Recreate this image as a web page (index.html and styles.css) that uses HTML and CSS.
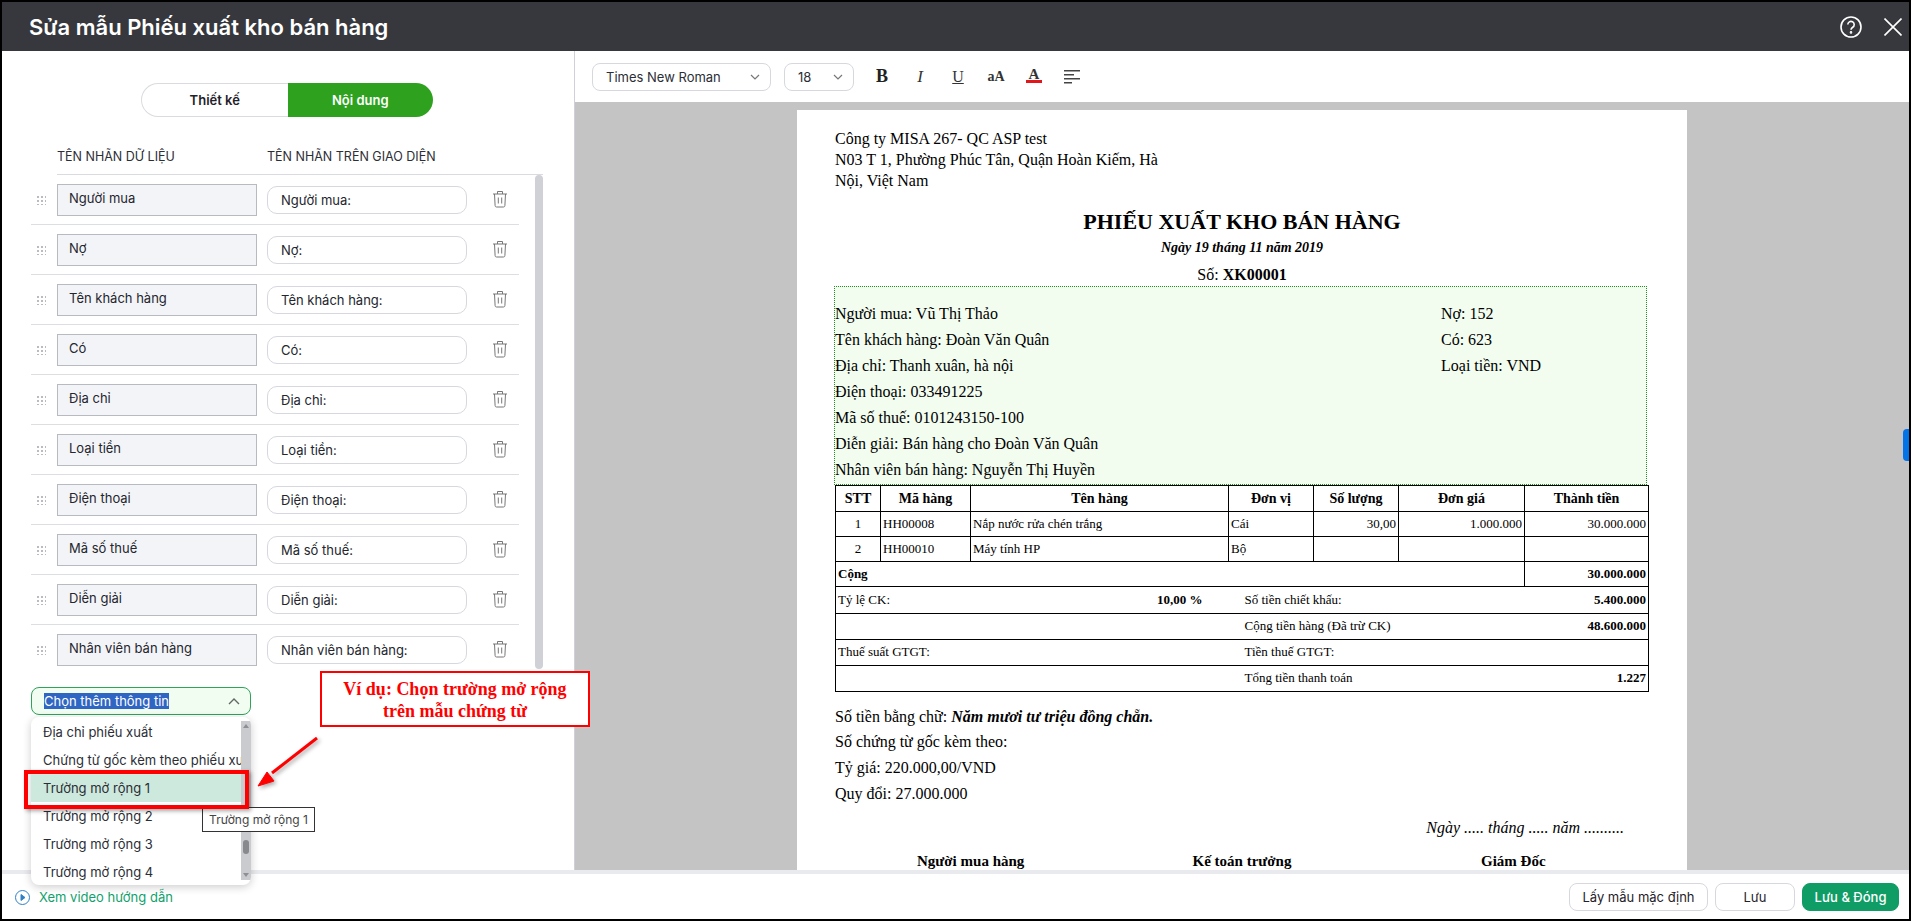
FILE: index.html
```html
<!DOCTYPE html>
<html lang="vi">
<head>
    <meta charset="UTF-8">
    <title>Sửa mẫu Phiếu xuất kho bán hàng</title>
    <link rel="stylesheet" href="styles.css">
</head>
<body>
    <div class="window">
        <header class="top-bar">
            <h1>Sửa mẫu Phiếu xuất kho bán hàng</h1>
            <svg class="top-icon" width="22" height="22" viewBox="0 0 22 22" fill="none" stroke="#fff" stroke-width="1.6">
                <circle cx="11" cy="11" r="10"/>
                <path d="M7.8 8.6a3.2 3.2 0 1 1 4.9 2.7c-1.1.7-1.7 1.2-1.7 2.5"/>
                <circle cx="11" cy="16.4" r=".5" fill="#fff"/>
            </svg>
            <svg class="top-icon close" width="18" height="18" viewBox="0 0 18 18" fill="none" stroke="#fff" stroke-width="1.6">
                <path d="M.5.5l17 17M17.5.5l-17 17"/>
            </svg>
        </header>

        <main class="content">
            <aside class="left-panel">
                <div class="toggle">
                    <span class="toggle-item">Thiết kế</span>
                    <span class="toggle-item active">Nội dung</span>
                </div>

                <div class="col-heads">
                    <span>TÊN NHÃN DỮ LIỆU</span>
                    <span>TÊN NHÃN TRÊN GIAO DIỆN</span>
                </div>

                <div class="list-wrap">
                    <div class="field-list">
                        <div class="field-row">
                            <span class="drag"></span>
                            <span class="data-label">Người mua</span>
                            <span class="ui-label">Người mua:</span>
                            <svg class="trash" width="16" height="18" viewBox="0 0 16 18" fill="none" stroke="#777" stroke-width="1"><path d="M1 4h14M5.5 4V1.5h5V4M2.5 4l.6 11.5c0 1 .6 1.5 1.5 1.5h6.800c.9 0 1.500-.5 1.500-1.500L13.500 4M6.300 7.500v6M9.700 7.500v6"/></svg>
                        </div>
                        <div class="field-row">
                            <span class="drag"></span>
                            <span class="data-label">Nợ</span>
                            <span class="ui-label">Nợ:</span>
                            <svg class="trash" width="16" height="18" viewBox="0 0 16 18" fill="none" stroke="#777" stroke-width="1"><path d="M1 4h14M5.5 4V1.5h5V4M2.5 4l.6 11.5c0 1 .6 1.5 1.5 1.5h6.800c.9 0 1.500-.5 1.500-1.500L13.500 4M6.300 7.500v6M9.700 7.500v6"/></svg>
                        </div>
                        <div class="field-row">
                            <span class="drag"></span>
                            <span class="data-label">Tên khách hàng</span>
                            <span class="ui-label">Tên khách hàng:</span>
                            <svg class="trash" width="16" height="18" viewBox="0 0 16 18" fill="none" stroke="#777" stroke-width="1"><path d="M1 4h14M5.5 4V1.5h5V4M2.5 4l.6 11.5c0 1 .6 1.5 1.5 1.5h6.800c.9 0 1.500-.5 1.500-1.500L13.500 4M6.300 7.500v6M9.700 7.500v6"/></svg>
                        </div>
                        <div class="field-row">
                            <span class="drag"></span>
                            <span class="data-label">Có</span>
                            <span class="ui-label">Có:</span>
                            <svg class="trash" width="16" height="18" viewBox="0 0 16 18" fill="none" stroke="#777" stroke-width="1"><path d="M1 4h14M5.5 4V1.5h5V4M2.5 4l.6 11.5c0 1 .6 1.5 1.5 1.5h6.800c.9 0 1.500-.5 1.500-1.500L13.500 4M6.300 7.500v6M9.700 7.500v6"/></svg>
                        </div>
                        <div class="field-row">
                            <span class="drag"></span>
                            <span class="data-label">Địa chỉ</span>
                            <span class="ui-label">Địa chỉ:</span>
                            <svg class="trash" width="16" height="18" viewBox="0 0 16 18" fill="none" stroke="#777" stroke-width="1"><path d="M1 4h14M5.5 4V1.5h5V4M2.5 4l.6 11.5c0 1 .6 1.5 1.5 1.5h6.800c.9 0 1.500-.5 1.500-1.500L13.500 4M6.300 7.500v6M9.700 7.500v6"/></svg>
                        </div>
                        <div class="field-row">
                            <span class="drag"></span>
                            <span class="data-label">Loại tiền</span>
                            <span class="ui-label">Loại tiền:</span>
                            <svg class="trash" width="16" height="18" viewBox="0 0 16 18" fill="none" stroke="#777" stroke-width="1"><path d="M1 4h14M5.5 4V1.5h5V4M2.5 4l.6 11.5c0 1 .6 1.5 1.5 1.5h6.800c.9 0 1.500-.5 1.500-1.500L13.500 4M6.300 7.500v6M9.700 7.500v6"/></svg>
                        </div>
                        <div class="field-row">
                            <span class="drag"></span>
                            <span class="data-label">Điện thoại</span>
                            <span class="ui-label">Điện thoại:</span>
                            <svg class="trash" width="16" height="18" viewBox="0 0 16 18" fill="none" stroke="#777" stroke-width="1"><path d="M1 4h14M5.5 4V1.5h5V4M2.5 4l.6 11.5c0 1 .6 1.5 1.5 1.5h6.800c.9 0 1.500-.5 1.500-1.500L13.500 4M6.300 7.500v6M9.700 7.500v6"/></svg>
                        </div>
                        <div class="field-row">
                            <span class="drag"></span>
                            <span class="data-label">Mã số thuế</span>
                            <span class="ui-label">Mã số thuế:</span>
                            <svg class="trash" width="16" height="18" viewBox="0 0 16 18" fill="none" stroke="#777" stroke-width="1"><path d="M1 4h14M5.5 4V1.5h5V4M2.5 4l.6 11.5c0 1 .6 1.5 1.5 1.5h6.800c.9 0 1.500-.5 1.500-1.500L13.500 4M6.300 7.500v6M9.700 7.500v6"/></svg>
                        </div>
                        <div class="field-row">
                            <span class="drag"></span>
                            <span class="data-label">Diễn giải</span>
                            <span class="ui-label">Diễn giải:</span>
                            <svg class="trash" width="16" height="18" viewBox="0 0 16 18" fill="none" stroke="#777" stroke-width="1"><path d="M1 4h14M5.5 4V1.5h5V4M2.5 4l.6 11.5c0 1 .6 1.5 1.5 1.5h6.800c.9 0 1.500-.5 1.500-1.500L13.500 4M6.300 7.500v6M9.700 7.500v6"/></svg>
                        </div>
                        <div class="field-row last">
                            <span class="drag"></span>
                            <span class="data-label">Nhân viên bán hàng</span>
                            <span class="ui-label">Nhân viên bán hàng:</span>
                            <svg class="trash" width="16" height="18" viewBox="0 0 16 18" fill="none" stroke="#777" stroke-width="1"><path d="M1 4h14M5.5 4V1.5h5V4M2.5 4l.6 11.5c0 1 .6 1.5 1.5 1.5h6.800c.9 0 1.500-.5 1.500-1.500L13.500 4M6.300 7.500v6M9.700 7.500v6"/></svg>
                        </div>
                    </div>
                    <div class="list-scroll"></div>
                </div>

                <div class="picker">
                    <div class="picker-box">
                        <span class="picker-text">Chọn thêm thông tin</span>
                        <svg width="12" height="7" viewBox="0 0 12 7" fill="none" stroke="#666" stroke-width="1.400"><path d="M1 6l5-5 5 5"/></svg>
                    </div>
                    <div class="picker-menu">
                        <div class="menu-items">
                            <div class="menu-item">Địa chỉ phiếu xuất</div>
                            <div class="menu-item">Chứng từ gốc kèm theo phiếu xuất</div>
                            <div class="menu-item hovered">Trường mở rộng 1</div>
                            <div class="menu-item">Trường mở rộng 2</div>
                            <div class="menu-item">Trường mở rộng 3</div>
                            <div class="menu-item">Trường mở rộng 4</div>
                        </div>
                        <div class="menu-scroll">
                            <span class="scroll-up"></span>
                            <span class="scroll-thumb"></span>
                            <span class="scroll-down"></span>
                        </div>
                    </div>
                </div>

                <div class="tooltip">Trường mở rộng 1</div>
                <div class="mark-box"></div>
                <svg class="mark-arrow" width="70" height="56" viewBox="0 0 70 56">
                    <path d="M65 2L20 37" stroke="#f00" stroke-width="3" fill="none"/>
                    <path d="M6 50L15 36L22 45Z" fill="#f00" stroke="#f00" stroke-width="1"/>
                </svg>
                <div class="callout">Ví dụ: Chọn trường mở rộng<br>trên mẫu chứng từ</div>
            </aside>

            <section class="editor">
                <div class="toolbar">
                    <div class="select font-select">Times New Roman
                        <svg width="10" height="6" viewBox="0 0 10 6" fill="none" stroke="#777" stroke-width="1.200"><path d="M1 1l4 4 4-4"/></svg>
                    </div>
                    <div class="select size-select">18
                        <svg width="10" height="6" viewBox="0 0 10 6" fill="none" stroke="#777" stroke-width="1.200"><path d="M1 1l4 4 4-4"/></svg>
                    </div>
                    <div class="tools">
                        <span class="tool tool-b">B</span>
                        <span class="tool tool-i">I</span>
                        <span class="tool tool-u">U</span>
                        <span class="tool tool-size">aA</span>
                        <span class="tool tool-color">A</span>
                        <span class="tool">
                            <svg width="16" height="14" viewBox="0 0 16 14" fill="#444"><path d="M0 0h16v1.500H0zM0 4h10v1.500H0zM0 8h16v1.500H0zM0 12h8v1.500H0z"/></svg>
                        </span>
                    </div>
                </div>

                <div class="stage">
                    <div class="paper">
                        <div class="company">Công ty MISA 267- QC ASP test<br>N03 T 1, Phường Phúc Tân, Quận Hoàn Kiếm, Hà<br>Nội, Việt Nam</div>
                        <h2 class="doc-title">PHIẾU XUẤT KHO BÁN HÀNG</h2>
                        <div class="doc-date">Ngày 19 tháng 11 năm 2019</div>
                        <div class="doc-no">Số: <b>XK00001</b></div>

                        <div class="info-box">
                            <div>
                                <div>Người mua: Vũ Thị Thảo</div>
                                <div>Tên khách hàng: Đoàn Văn Quân</div>
                                <div>Địa chỉ: Thanh xuân, hà nội</div>
                                <div>Điện thoại: 033491225</div>
                                <div>Mã số thuế: 0101243150-100</div>
                                <div>Diễn giải: Bán hàng cho Đoàn Văn Quân</div>
                                <div>Nhân viên bán hàng: Nguyễn Thị Huyền</div>
                            </div>
                            <div>
                                <div>Nợ: 152</div>
                                <div>Có: 623</div>
                                <div>Loại tiền: VND</div>
                            </div>
                        </div>

                        <table class="items">
                            <colgroup>
                                <col class="c-stt"><col class="c-code"><col class="c-name"><col class="c-unit"><col class="c-qty"><col class="c-price"><col class="c-total">
                            </colgroup>
                            <tr class="head">
                                <th>STT</th><th>Mã hàng</th><th>Tên hàng</th><th>Đơn vị</th><th>Số lượng</th><th>Đơn giá</th><th>Thành tiền</th>
                            </tr>
                            <tr>
                                <td class="mid">1</td><td>HH00008</td><td>Nắp nước rửa chén trắng</td><td>Cái</td><td class="num">30,00</td><td class="num">1.000.000</td><td class="num">30.000.000</td>
                            </tr>
                            <tr>
                                <td class="mid">2</td><td>HH00010</td><td>Máy tính HP</td><td>Bộ</td><td></td><td></td><td></td>
                            </tr>
                            <tr>
                                <td colspan="6"><b>Cộng</b></td><td class="num"><b>30.000.000</b></td>
                            </tr>
                        </table>

                        <table class="summary">
                            <colgroup>
                                <col class="s-label"><col class="s-rate"><col class="s-text"><col class="s-value">
                            </colgroup>
                            <tr><td>Tỷ lệ CK:</td><td class="num"><b>10,00 %</b></td><td>Số tiền chiết khấu:</td><td class="num"><b>5.400.000</b></td></tr>
                            <tr><td></td><td></td><td>Cộng tiền hàng (Đã trừ CK)</td><td class="num"><b>48.600.000</b></td></tr>
                            <tr><td>Thuế suất GTGT:</td><td></td><td>Tiền thuế GTGT:</td><td></td></tr>
                            <tr><td></td><td></td><td>Tổng tiền thanh toán</td><td class="num"><b>1.227</b></td></tr>
                        </table>

                        <div class="notes">
                            <div>Số tiền bằng chữ: <b><i>Năm mươi tư triệu đồng chẵn.</i></b></div>
                            <div>Số chứng từ gốc kèm theo:</div>
                            <div>Tỷ giá: 220.000,00/VND</div>
                            <div>Quy đổi: 27.000.000</div>
                        </div>
                        <div class="sign-date">Ngày ..... tháng ..... năm ..........</div>
                        <div class="signs">
                            <div><b>Người mua hàng</b><i>(Ký, họ tên)</i></div>
                            <div><b>Kế toán trưởng</b><i>(Ký, họ tên)</i></div>
                            <div><b>Giám Đốc</b><i>(Ký, họ tên, đóng dấu)</i></div>
                        </div>
                    </div>
                    <span class="side-tab"></span>
                </div>
            </section>
        </main>

        <footer class="bottom-bar">
            <a class="video-link">
                <svg width="15" height="15" viewBox="0 0 15 15" fill="none" stroke="#2f80c8" stroke-width="1"><circle cx="7.500" cy="7.500" r="7"/><path d="M6 4.500l4 3-4 3z" fill="#2f80c8"/></svg>
                Xem video hướng dẫn
            </a>
            <div class="actions">
                <button class="btn">Lấy mẫu mặc định</button>
                <button class="btn btn-save">Lưu</button>
                <button class="btn btn-primary">Lưu &amp; Đóng</button>
            </div>
        </footer>
    </div>
</body>
</html>
```
FILE: styles.css
```css
html, body {
    height: 100%;
}

body {
    margin: 0;
    background-color: #000;
    font-family: Inter, "Noto Sans", sans-serif;
    overflow: hidden;
}

.window {
    margin: 2px;
    width: 1907px;
    height: 917px;
    background: white;
    display: flex;
    flex-direction: column;
}

.top-bar {
    height: 49px;
    flex: none;
    background-color: #36383d;
    display: flex;
    align-items: center;
    padding: 0 7px 0 27px;
    box-sizing: border-box;
    color: white;
}

.top-bar h1 {
    margin: 0;
    font-size: 22px;
    font-weight: 600;
    flex: 1;
}

.top-icon.close {
    margin-left: 22px;
}

.content {
    flex: 1;
    display: flex;
    min-height: 0;
}

.left-panel {
    width: 572px;
    flex: none;
    position: relative;
    z-index: 2;
    padding-top: 32px;
    box-sizing: border-box;
}

.toggle {
    width: 292px;
    height: 34px;
    margin-left: 139px;
    display: flex;
    font-size: 13px;
    font-weight: 600;
}

.toggle-item {
    flex: 1;
    display: flex;
    align-items: center;
    justify-content: center;
    border: 1px solid #d9dbdf;
    border-right: none;
    border-radius: 17px 0 0 17px;
    color: #1f2229;
}

.toggle-item.active {
    background-color: #2ea21f;
    border: none;
    border-radius: 0 17px 17px 0;
    color: white;
}

.col-heads {
    margin: 31px 0 0 55px;
    width: 486px;
    height: 26px;
    border-bottom: 1px solid #d9dbdf;
    display: flex;
    font-size: 12.500px;
    color: #2b2e35;
}

.col-heads span {
    width: 210px;
    padding-top: 1px;
}

.list-wrap {
    display: flex;
    margin-left: 29px;
}

.field-list {
    width: 488px;
}

.field-row {
    height: 50px;
    box-sizing: border-box;
    border-bottom: 1px solid #dcdee2;
    padding-top: 9px;
    display: flex;
    align-items: flex-start;
    font-size: 13px;
    color: #23262d;
}

.field-row.last {
    border-bottom: none;
}

.drag {
    width: 10px;
    height: 10px;
    margin: 11px 11px 0 5px;
    background-image: radial-gradient(#b9bbc0 1.100px, transparent 1.300px);
    background-size: 4px 4px;
}

.data-label {
    width: 200px;
    height: 32px;
    box-sizing: border-box;
    background-color: #f3f4f8;
    border: 1px solid #b7bac1;
    padding: 5px 11px;
}

.ui-label {
    width: 200px;
    height: 28px;
    margin: 2px 0 0 10px;
    box-sizing: border-box;
    border: 1px solid #d6d8dd;
    border-radius: 10px;
    padding: 5px 13px;
}

.trash {
    margin: 6px 0 0 25px;
}

.list-scroll {
    width: 8px;
    height: 494px;
    margin-left: 16px;
    background-color: #cfd1d6;
    border-radius: 4px;
}

.picker {
    position: relative;
    width: 220px;
    margin: 12px 0 0 29px;
}

.picker-box {
    height: 28px;
    box-sizing: border-box;
    background-color: #f0fdf0;
    border: 1px solid #2ea35a;
    border-radius: 8px;
    display: flex;
    align-items: center;
    justify-content: space-between;
    padding: 0 10px 0 12px;
    font-size: 13px;
}

.picker-text {
    background-color: #2f66c4;
    color: white;
    line-height: 16px;
}

.picker-menu {
    position: absolute;
    top: 30px;
    left: 0;
    width: 220px;
    height: 168px;
    background: white;
    border-radius: 8px;
    box-shadow: 0 2px 8px rgba(0, 0, 0, 0.2);
    display: flex;
    overflow: hidden;
}

.menu-items {
    width: 210px;
    padding-top: 1px;
    font-size: 13px;
    color: #2b2e35;
}

.menu-item {
    height: 28px;
    line-height: 28px;
    padding-left: 12px;
    white-space: nowrap;
    overflow: hidden;
}

.menu-item.hovered {
    background-color: #cde8dc;
}

.menu-scroll {
    position: relative;
    width: 10px;
    height: 159px;
    margin-top: 4px;
    background-color: #c9cbcf;
}

.scroll-up, .scroll-down {
    position: absolute;
    left: 2px;
    border-left: 3px solid transparent;
    border-right: 3px solid transparent;
}

.scroll-up {
    top: 3px;
    border-bottom: 4px solid #8d8f94;
}

.scroll-down {
    bottom: 3px;
    border-top: 4px solid #8d8f94;
}

.scroll-thumb {
    position: absolute;
    top: 119px;
    left: 2px;
    width: 6px;
    height: 14px;
    border-radius: 3px;
    background-color: #88898d;
}

.tooltip {
    position: absolute;
    left: 200px;
    top: 756px;
    width: 113px;
    height: 25px;
    box-sizing: border-box;
    border: 1px solid #333;
    background: white;
    font-size: 12px;
    line-height: 23px;
    text-align: center;
    color: #444;
}

.mark-box {
    position: absolute;
    left: 22px;
    top: 719px;
    width: 225px;
    height: 39px;
    box-sizing: border-box;
    border: 4px solid #f00;
    box-shadow: 2px 2px 4px rgba(0, 0, 0, 0.35);
}

.mark-arrow {
    position: absolute;
    left: 250px;
    top: 685px;
    overflow: visible;
    filter: drop-shadow(2px 2px 2px rgba(0, 0, 0, 0.35));
}

.callout {
    position: absolute;
    left: 318px;
    top: 620px;
    width: 270px;
    height: 56px;
    box-sizing: border-box;
    border: 2px solid #f00;
    background: white;
    color: #f00;
    font-family: "Liberation Serif", serif;
    font-size: 18px;
    font-weight: bold;
    line-height: 22px;
    text-align: center;
    padding-top: 5px;
}

.editor {
    flex: 1;
    min-width: 0;
    display: flex;
    flex-direction: column;
    border-left: 1px solid #cfd1d6;
}

.toolbar {
    height: 51px;
    flex: none;
    display: flex;
    align-items: center;
    padding-left: 17px;
    box-sizing: border-box;
}

.select {
    height: 28px;
    box-sizing: border-box;
    border: 1px solid #d6d8dd;
    border-radius: 8px;
    display: flex;
    align-items: center;
    justify-content: space-between;
    padding: 0 10px 0 13px;
    font-size: 13px;
    color: #2b2e35;
}

.font-select {
    width: 179px;
}

.size-select {
    width: 70px;
    margin-left: 13px;
}

.tools {
    display: flex;
    margin-left: 9px;
}

.tool {
    width: 38px;
    height: 24px;
    display: flex;
    align-items: center;
    justify-content: center;
    font-family: "Liberation Serif", serif;
    color: #333;
}

.tool-b {
    font-size: 18px;
    font-weight: bold;
    color: #222;
}

.tool-i {
    font-size: 17px;
    font-style: italic;
}

.tool-u {
    font-size: 16px;
    text-decoration: underline;
}

.tool-size {
    font-size: 14px;
    font-weight: bold;
}

.tool-color {
    font-size: 15px;
    font-weight: bold;
    line-height: 16px;
    height: 18px;
    border-bottom: 3px solid transparent;
    background: linear-gradient(#e3161c, #e3161c) center bottom / 16px 3px no-repeat;
}

.stage {
    flex: 1;
    min-height: 0;
    position: relative;
    background-color: #c4c4c4;
    padding: 8px 0 0 222px;
    overflow: hidden;
}

.side-tab {
    position: absolute;
    right: 0;
    top: 327px;
    width: 6px;
    height: 32px;
    background-color: #0473e8;
    border-radius: 4px 0 0 4px;
}

.paper {
    width: 890px;
    height: 800px;
    box-sizing: border-box;
    background: white;
    padding: 18px 38px 0;
    font-family: "Liberation Serif", serif;
    font-size: 16px;
    color: #000;
}

.company {
    line-height: 21px;
}

.doc-title {
    margin: 16px 0 0;
    font-size: 22px;
    line-height: 30px;
    text-align: center;
}

.doc-date {
    font-size: 14px;
    font-weight: bold;
    font-style: italic;
    line-height: 20px;
    text-align: center;
    margin-top: 1px;
}

.doc-no {
    line-height: 22px;
    text-align: center;
    margin-top: 6px;
}

.info-box {
    margin-left: -1px;
    width: 813px;
    height: 199px;
    box-sizing: border-box;
    background-color: #f2fdf0;
    border: 1px dotted #1f8f1f;
    padding-top: 14px;
    display: grid;
    grid-template-columns: 606px 1fr;
    line-height: 26px;
}

.items, .summary {
    width: 813px;
    table-layout: fixed;
    border-collapse: collapse;
    font-size: 13px;
}

.items td, .items th, .summary td {
    border: 1px solid #000;
    padding: 0 2px;
    white-space: nowrap;
}

.items tr {
    height: 25px;
}

.items .head {
    height: 26px;
    font-size: 14px;
}

.items th {
    text-align: center;
}

.mid {
    text-align: center;
}

.num {
    text-align: right;
}

.c-stt { width: 45px; }
.c-code { width: 90px; }
.c-name { width: 258px; }
.c-unit { width: 85px; }
.c-qty { width: 85px; }
.c-price { width: 126px; }
.c-total { width: 124px; }

.summary tr {
    height: 26px;
}

.summary td {
    border-left: none;
    border-right: none;
    border-top: none;
}

.summary td:first-child {
    border-left: 1px solid #000;
}

.summary td:last-child {
    border-right: 1px solid #000;
}

.s-label { width: 280px; }
.s-rate { width: 89px; }
.s-text { width: 284px; }
.s-value { width: 160px; }

.summary td:nth-child(3) {
    padding-left: 40px;
}

.notes {
    margin-top: 12px;
    line-height: 25.700px;
}

.sign-date {
    margin-top: 13px;
    font-style: italic;
    text-align: right;
    padding-right: 25px;
}

.signs {
    margin-top: 16px;
    display: grid;
    grid-template-columns: repeat(3, 1fr);
    text-align: center;
    font-size: 15px;
}

.signs b, .signs i {
    display: block;
}

.signs i {
    font-size: 14px;
    margin-top: 4px;
}

.bottom-bar {
    height: 49px;
    flex: none;
    box-sizing: border-box;
    border-top: 4px solid #e9eaee;
    display: flex;
    align-items: center;
    justify-content: space-between;
    padding: 1px 10px 0 13px;
    position: relative;
    z-index: 1;
    background: white;
}

.video-link {
    display: flex;
    align-items: center;
    gap: 9px;
    font-size: 13px;
    color: #12a16c;
}

.actions {
    display: flex;
    gap: 7px;
}

.btn {
    height: 28px;
    box-sizing: border-box;
    border: 1px solid #d6d8dd;
    border-radius: 8px;
    background: white;
    font-family: Inter, "Noto Sans", sans-serif;
    font-size: 13px;
    color: #1f2229;
    width: 139px;
    padding: 0;
}

.btn-save {
    width: 80px;
}

.btn-primary {
    width: 97px;
    background-color: #109c65;
    border-color: #109c65;
    color: white;
    font-weight: 500;
}
```
